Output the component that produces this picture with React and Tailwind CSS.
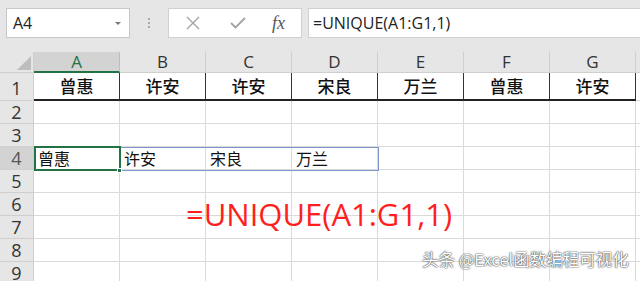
import React from 'react';

const cols = ['A', 'B', 'C', 'D', 'E', 'F', 'G'];
const row1 = ['曾惠', '许安', '许安', '宋良', '万兰', '曾惠', '许安'];
const row4 = ['曾惠', '许安', '宋良', '万兰', '', '', ''];

const cjk = { fontFamily: '"Noto Sans CJK SC", "Noto Sans", sans-serif' };
const ui = { fontFamily: '"Open Sans", "Noto Sans", sans-serif' };

function Toolbar() {
  return (
    <div className="h-[52px] bg-[#e6e6e6] flex items-start pt-2 pl-[6px]">
      <div className="w-[124px] h-[30px] bg-white border border-[#c8c8c8] flex items-center justify-between pl-[6px] pr-[8px]" style={ui}>
        <span className="text-[16px] text-[#222]">A4</span>
        <span className="w-0 h-0 border-l-[3px] border-r-[3px] border-t-[3px] border-l-transparent border-r-transparent border-t-[#777]"></span>
      </div>
      <div className="w-[38px] h-[30px] flex flex-col items-center justify-center gap-[2px]">
        <span className="w-[2px] h-[2px] bg-[#aaa]"></span>
        <span className="w-[2px] h-[2px] bg-[#aaa]"></span>
        <span className="w-[2px] h-[2px] bg-[#aaa]"></span>
      </div>
      <div className="w-[134px] h-[30px] bg-white border border-[#d0d0d0] flex items-center pl-[17px]">
        <svg width="14" height="14" viewBox="0 0 14 14" className="mr-[30px]">
          <path d="M1 1L13 13M13 1L1 13" stroke="#a3a3a3" strokeWidth="1.4" fill="none" />
        </svg>
        <svg width="16" height="12" viewBox="0 0 16 12" className="mr-[26px]">
          <path d="M1 6L5.5 10.5L15 1" stroke="#a3a3a3" strokeWidth="1.8" fill="none" />
        </svg>
        <span className="italic text-[18px] text-[#555] leading-none" style={{ fontFamily: '"Liberation Serif", serif' }}>fx</span>
      </div>
      <div className="w-[6px]"></div>
      <div className="flex-1 h-[30px] bg-white border-t border-b border-l border-[#d0d0d0] flex items-center pl-[4px]" style={ui}>
        <span className="text-[16px] text-[#222]">=UNIQUE(A1:G1,1)</span>
      </div>
    </div>
  );
}

function Sheet() {
  const rows = [2, 3, 4, 5, 6, 7, 8, 9];
  return (
    <div className="relative grid grid-cols-[34px_repeat(7,86px)_1fr] grid-rows-[21px_28px_repeat(8,23px)] bg-white">
      <div className="bg-[#e6e6e6] border-r border-b border-[#cfcfcf] flex items-end justify-end p-[2px]">
        <svg width="14" height="14" viewBox="0 0 14 14">
          <path d="M14 0L14 14L0 14Z" fill="#bdbdbd" />
        </svg>
      </div>
      {cols.map((c, i) => (
        <div
          key={c}
          className={
            i === 0
              ? 'bg-[#d3d3d3] border-r border-[#bdbdbd] border-b-2 border-b-[#217346] flex items-center justify-center text-[17px] text-[#217346]'
              : 'bg-[#e6e6e6] border-r border-b border-[#cfcfcf] flex items-center justify-center text-[17px] text-[#333]'
          }
          style={ui}
        >
          {c}
        </div>
      ))}
      <div className="bg-[#e6e6e6] border-b border-[#cfcfcf]"></div>

      <div className="bg-[#e6e6e6] border-r border-b border-[#cfcfcf] flex items-end justify-center text-[18px] text-[#333] leading-[24px]" style={ui}>1</div>
      {row1.map((t, i) => (
        <div
          key={i}
          className="border-r border-r-[#333] border-b-2 border-b-[#222] flex items-center justify-center text-[17px] text-[#111] font-medium"
          style={cjk}
        >
          {t}
        </div>
      ))}
      <div className="border-b border-[#d9d9d9]"></div>

      {rows.map((r) => (
        <React.Fragment key={r}>
          <div
            className={
              'border-r border-b border-[#cfcfcf] flex items-end justify-center text-[18px] leading-[22px] ' +
              (r === 4 ? 'bg-[#d3d3d3] text-[#555]' : 'bg-[#e6e6e6] text-[#333]')
            }
            style={ui}
          >
            {r}
          </div>
          {cols.map((c, i) => (
            <div key={c} className="border-r border-b border-[#dadada] flex items-center pl-[4px] text-[16px] text-[#111]" style={cjk}>
              {r === 4 ? row4[i] : ''}
            </div>
          ))}
          <div className="border-b border-[#dadada]"></div>
        </React.Fragment>
      ))}

      <div className="absolute left-[34px] top-[95px] w-[345px] h-[24px] border border-[#7f95c8] pointer-events-none"></div>
      <div className="absolute left-[34px] top-[94px] w-[87px] h-[25px] border-2 border-[#217346] pointer-events-none"></div>
      <div className="absolute left-[117px] top-[116px] w-[5px] h-[5px] bg-[#217346] border border-white pointer-events-none"></div>

      <div className="absolute left-[186px] top-[141px] text-[31px] leading-[42px] text-[#ff1f1f] pointer-events-none" style={ui}>
        =UNIQUE(A1:G1,1)
      </div>
      <div
        className="absolute left-[422px] top-[196px] text-[16.5px] leading-[22px] text-white pointer-events-none"
        style={{ ...cjk, textShadow: '0 0 2px rgba(0,0,0,0.7), 0 0 1px rgba(0,0,0,0.8)' }}
      >
        头条 @Excel函数编程可视化
      </div>
    </div>
  );
}

export default function App() {
  return (
    <div className="w-[640px] h-[281px] overflow-hidden bg-white">
      <Toolbar />
      <Sheet />
    </div>
  );
}
